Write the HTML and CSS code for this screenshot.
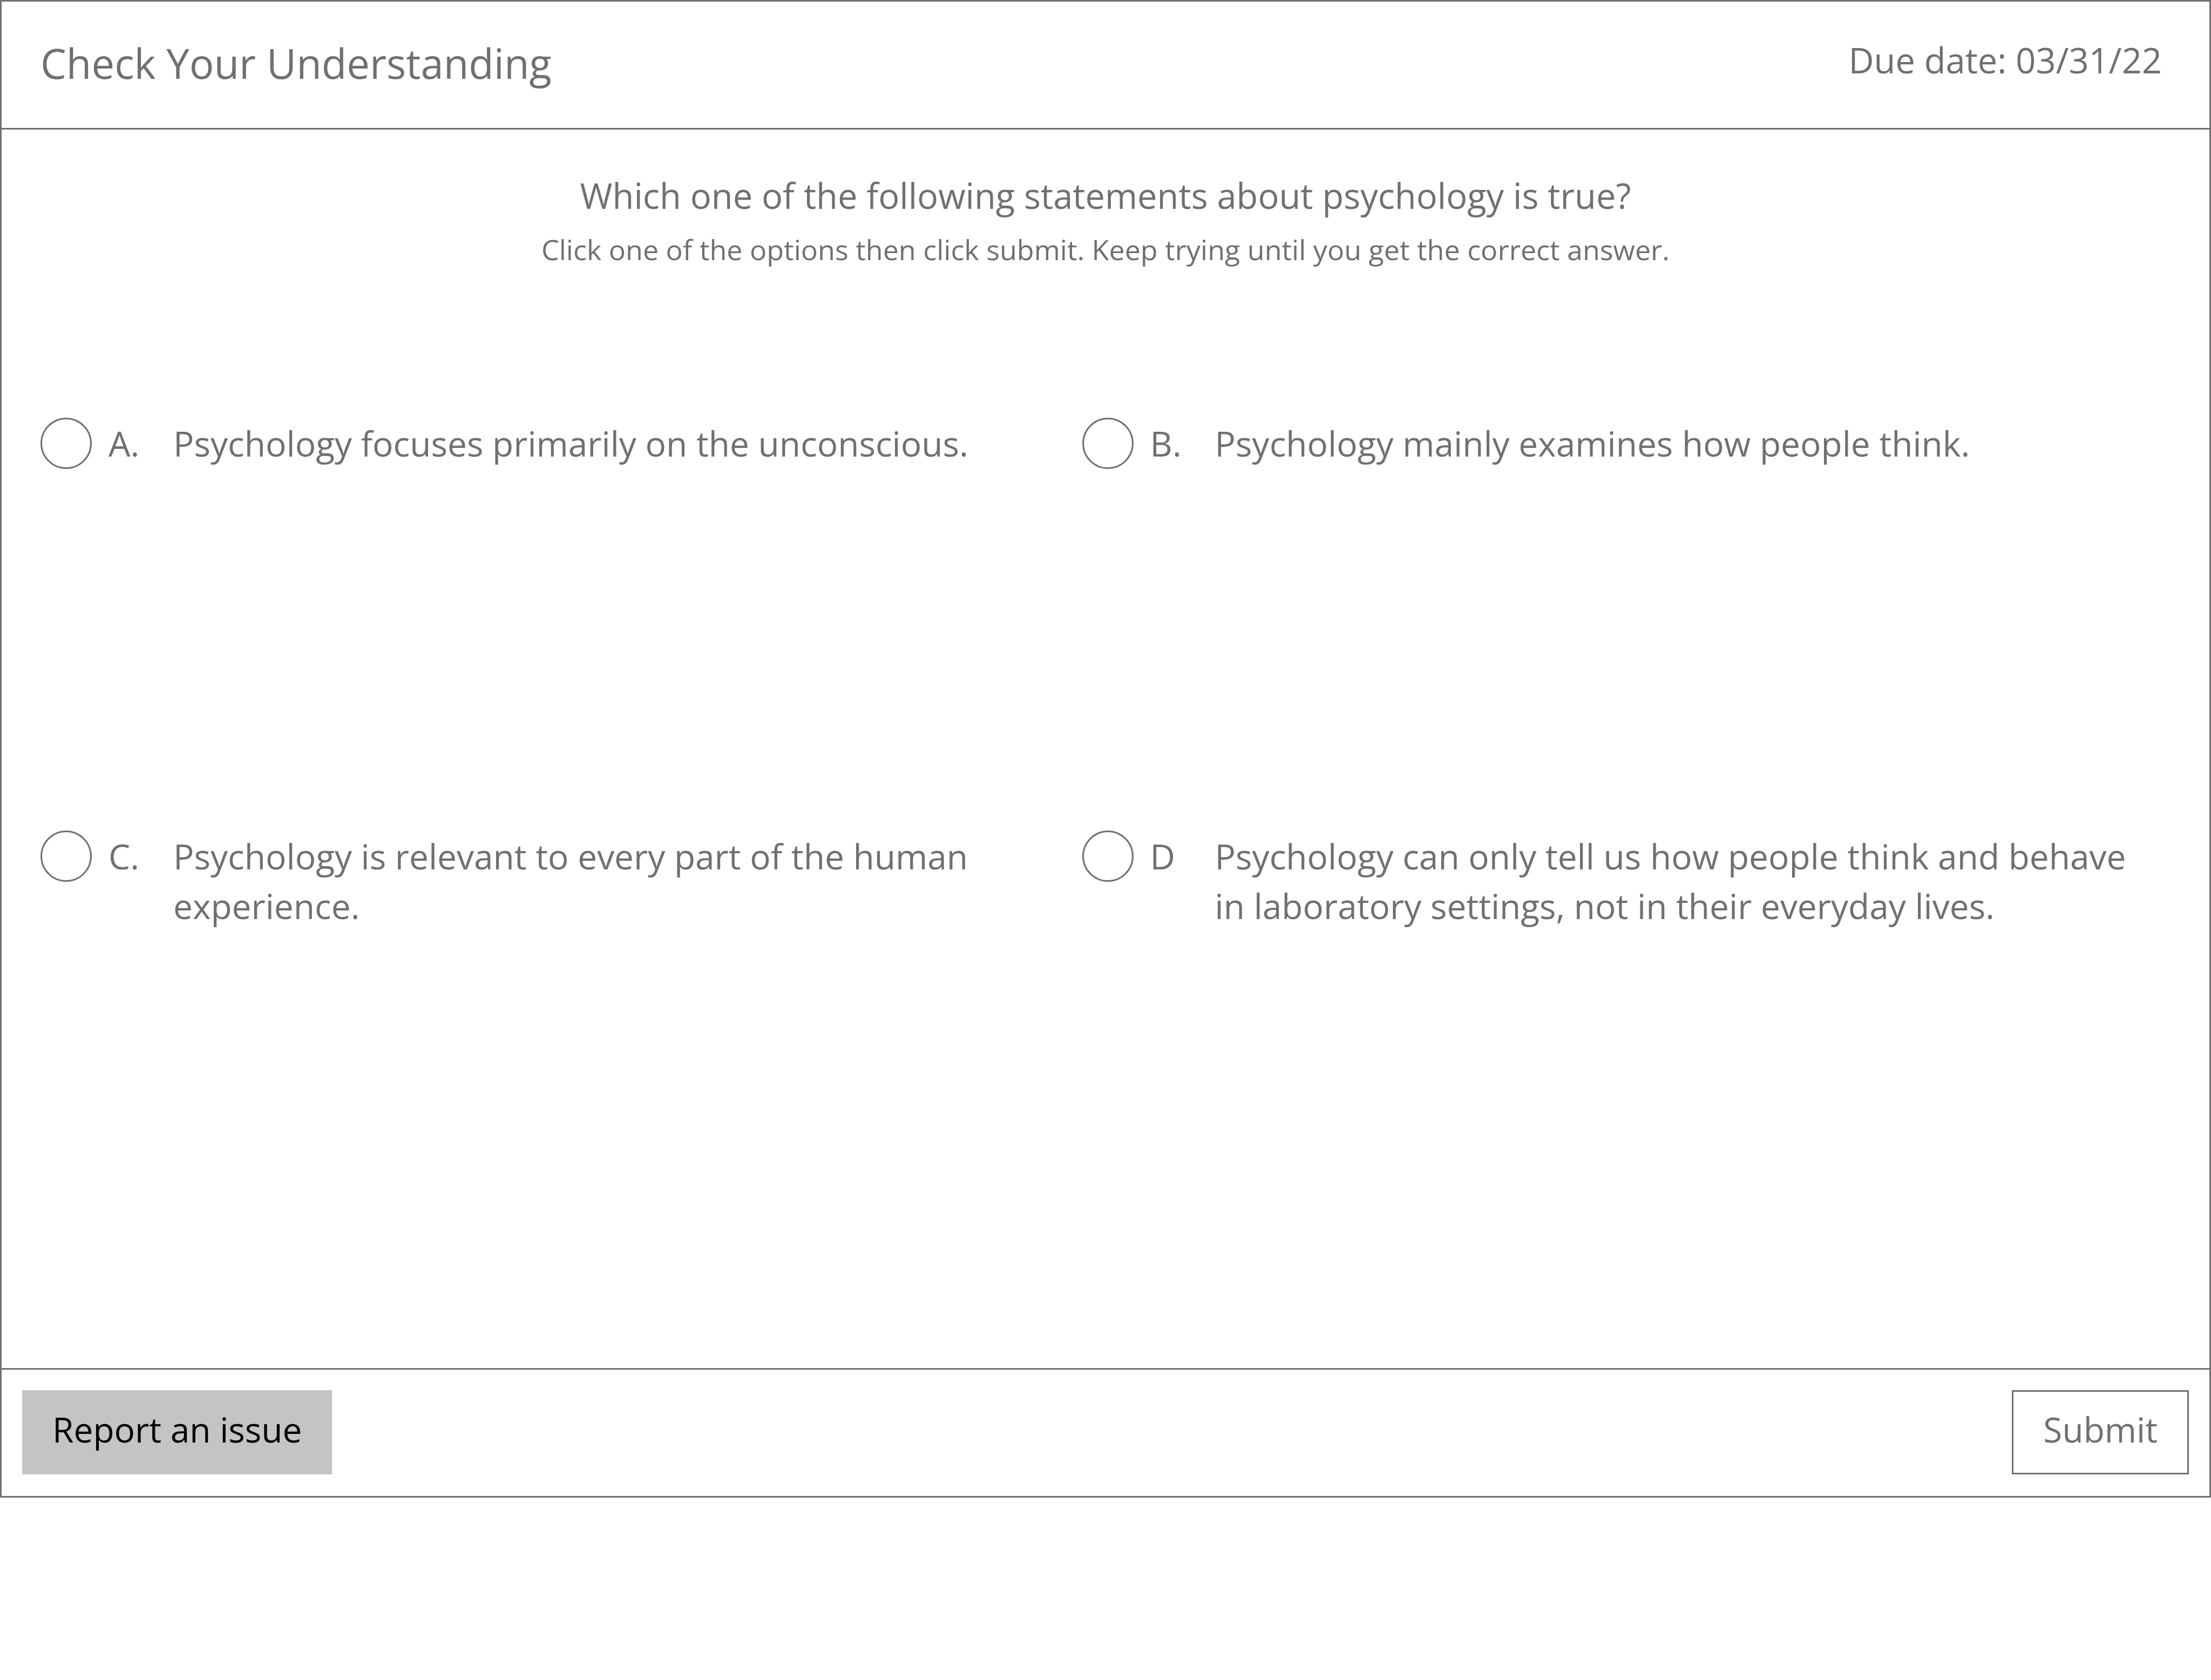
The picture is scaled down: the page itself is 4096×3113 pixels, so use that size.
FILE: index.html
```html
<!DOCTYPE html>
<html lang="en">
<head>
  <meta charset="utf-8">
  <meta name="viewport" content="width=device-width, initial-scale=1">
  <title>Check Your Understanding</title>
  <link rel="stylesheet" href="styles.css">
</head>
<body>
  <form class="quiz">
    <header class="quiz-header">
      <h1 class="quiz-title">Check Your Understanding</h1>
      <p class="due-date">Due date: 03/31/22</p>
    </header>

    <main class="quiz-body">
      <h2 class="question" id="question">Which one of the following statements about psychology is true?</h2>
      <p class="hint" id="hint">Click one of the options then click submit. Keep trying until you get the correct answer.</p>

      <div class="options" role="radiogroup" aria-labelledby="question" aria-describedby="hint">
        <label class="option">
          <input class="option-radio" type="radio" name="answer" value="a">
          <span class="option-letter">A.</span>
          <span class="option-text">Psychology focuses primarily on the unconscious.</span>
        </label>
        <label class="option">
          <input class="option-radio" type="radio" name="answer" value="b">
          <span class="option-letter">B.</span>
          <span class="option-text">Psychology mainly examines how people think.</span>
        </label>
        <label class="option">
          <input class="option-radio" type="radio" name="answer" value="c">
          <span class="option-letter">C.</span>
          <span class="option-text">Psychology is relevant to every part of the human experience.</span>
        </label>
        <label class="option">
          <input class="option-radio" type="radio" name="answer" value="d">
          <span class="option-letter">D</span>
          <span class="option-text">Psychology can only tell us how people think and behave in laboratory settings, not in their everyday lives.</span>
        </label>
      </div>
    </main>

    <footer class="quiz-footer">
      <button class="button button-report" type="button">Report an issue</button>
      <button class="button button-submit" type="submit">Submit</button>
    </footer>
  </form>
</body>
</html>
```
FILE: styles.css
```css
:root {
  --ink: #707070;
  --fill: #c4c4c4;
  --line: 3px;
}

* {
  box-sizing: border-box;
}

body {
  margin: 0;
  background: #fff;
  color: var(--ink);
  font-family: "Segoe UI", "Open Sans", "Noto Sans", sans-serif;
  font-size: 65px;
  line-height: 92px;
}

h1,
h2,
p {
  margin: 0;
  font-weight: 400;
}

.quiz {
  border: var(--line) solid var(--ink);
}

.quiz-header {
  display: flex;
  justify-content: space-between;
  align-items: flex-start;
  padding: 62px 88px 68px 72px;
  border-bottom: var(--line) solid var(--ink);
}

.quiz-title {
  font-size: 76px;
  line-height: 104px;
}

.quiz-body {
  padding: 76px 0 231px;
}

.question,
.hint {
  text-align: center;
}

.question {
  font-size: 65px;
}

.hint {
  margin-top: 18px;
  font-size: 52px;
  line-height: 72px;
}

.options {
  display: grid;
  grid-template-columns: 49fr 51fr;
  grid-auto-rows: minmax(765px, auto);
  margin-top: 276px;
  padding: 0 80px 0 72px;
  font-size: 64px;
}

.option {
  display: grid;
  grid-template-columns: auto 120px 1fr;
  align-items: start;
  align-content: start;
  padding-right: 40px;
}

.option-radio {
  appearance: none;
  width: 95px;
  height: 95px;
  margin: 0 31px 0 0;
  border: var(--line) solid var(--ink);
  border-radius: 50%;
  background: #fff;
}

.option-radio:checked {
  background: radial-gradient(var(--ink) 50%, #fff 52%);
}

.option-letter,
.option-text {
  padding-top: 2px;
}

.quiz-footer {
  display: flex;
  justify-content: space-between;
  padding: 38px 38px 40px;
  border-top: var(--line) solid var(--ink);
}

.button {
  padding: 24px 55px 34px;
  border: var(--line) solid var(--ink);
  border-radius: 0;
  background: #fff;
  color: var(--ink);
  font: inherit;
  font-size: 64px;
  cursor: pointer;
}

.button-report {
  padding-inline: 53px;
  border-color: var(--fill);
  background: var(--fill);
  color: #000;
}
```
